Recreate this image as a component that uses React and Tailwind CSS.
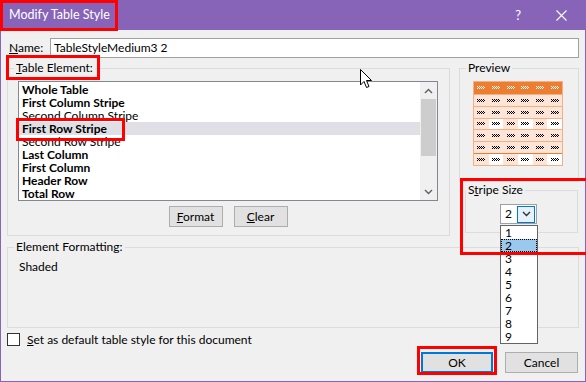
import React from "react";

function Mark({ color }) {
  const rects = [];
  for (let y = 0; y < 3; y++) {
    for (let x = 0; x < 8; x++) {
      if ((x + y) % 2 === 0) rects.push(<rect key={`${x}-${y}`} x={x} y={y} width="1" height="1" fill={color} />);
    }
  }
  return (
    <svg width="8" height="3" viewBox="0 0 8 3" shapeRendering="crispEdges">
      {rects}
    </svg>
  );
}

function PreviewGrid() {
  const rows = [0, 1, 2, 3, 4, 5, 6];
  const cols = [0, 1, 2, 3, 4, 5];
  return (
    <div className="w-[90px] h-[85px] border border-[#f4b084] flex flex-col bg-[#fce4d6]">
      {rows.map((r) => (
        <div
          key={r}
          className={
            r === 0
              ? "h-[12px] flex bg-[#ed7d31]"
              : r === 6
              ? "h-[12px] flex border-t border-[#ed7d31]"
              : "h-[12px] flex border-t border-[#f4b084]"
          }
        >
          {cols.map((c) => {
            const white = (r === 3 || r === 6) && c % 2 === 1;
            return (
              <div
                key={c}
                className={
                  white
                    ? "flex-1 flex items-center justify-center bg-white"
                    : "flex-1 flex items-center justify-center"
                }
              >
                <Mark color={r === 0 ? "#ffffff" : "#000000"} />
              </div>
            );
          })}
        </div>
      ))}
    </div>
  );
}

function Chevron({ up, color = "#606060" }) {
  return (
    <svg width="9" height="6" viewBox="0 0 9 6">
      <path
        d={up ? "M1 5 L4.5 1.5 L8 5" : "M1 1 L4.5 4.5 L8 1"}
        fill="none"
        stroke={color}
        strokeWidth="1.4"
      />
    </svg>
  );
}

export default function App() {
  const items = [
    { t: "Whole Table", b: true },
    { t: "First Column Stripe", b: true },
    { t: "Second Column Stripe", b: false },
    { t: "First Row Stripe", b: true, sel: true },
    { t: "Second Row Stripe", b: false },
    { t: "Last Column", b: true },
    { t: "First Column", b: true },
    { t: "Header Row", b: true },
    { t: "Total Row", b: true },
  ];
  const sizes = ["1", "2", "3", "4", "5", "6", "7", "8", "9"];

  return (
    <div className="w-[586px] h-[382px] relative bg-[#f0f0f0] text-[12px] leading-[16px] text-black overflow-hidden font-['Lato','Segoe_UI',sans-serif]">
      {/* Title bar */}
      <div className="h-[30px] bg-[#8764b8] flex items-center pl-[9px] text-white">
        <span className="text-[12.5px]">Modify Table Style</span>
        <span className="ml-auto mr-[35px] text-[13px]">?</span>
        <svg width="11" height="11" viewBox="0 0 11 11" className="mr-[19px]">
          <path d="M0.5 0.5 L10.5 10.5 M10.5 0.5 L0.5 10.5" stroke="#ffffff" strokeWidth="1.1" />
        </svg>
      </div>

      {/* Body */}
      <div className="h-[352px] border-x border-b border-[#8764b8] flex flex-col">
        {/* Name row */}
        <div className="mt-[8px] flex items-center h-[20px] pl-[8px]">
          <span className="w-[41px]">
            <span className="underline">N</span>ame:
          </span>
          <div className="w-[529px] h-[20px] border border-[#a0a0a0] bg-white pl-[3px] flex items-center">
            TableStyleMedium3 2
          </div>
        </div>

        {/* Top area */}
        <div className="mt-[2px] flex pl-[6px]">
          <fieldset className="w-[443px] h-[176px] border border-[#dcdcdc]">
            <legend className="ml-[6px] px-[2px] leading-[16px]">
              <span className="underline">T</span>able Element:
            </legend>
            <div className="mt-[5px] ml-[10px] w-[420px] h-[120px] border border-[#828790] bg-white flex">
              <div className="flex-1 pt-[1px]">
                {items.map((it) => (
                  <div
                    key={it.t}
                    className={
                      (it.sel ? "bg-[#e0dfe5] " : "") +
                      (it.b ? "font-bold " : "") +
                      "h-[13px] leading-[13px] pl-[3px] whitespace-nowrap"
                    }
                  >
                    {it.t}
                  </div>
                ))}
              </div>
              <div className="w-[17px] bg-[#f0f0f0] flex flex-col items-center">
                <div className="h-[17px] flex items-center justify-center">
                  <Chevron up />
                </div>
                <div className="w-[15px] h-[57px] bg-[#cdcdcd]" />
                <div className="flex-1" />
                <div className="h-[17px] flex items-center justify-center">
                  <Chevron />
                </div>
              </div>
            </div>
            <div className="mt-[5px] ml-[10px] w-[420px] flex justify-center gap-[11px]">
              <div className="w-[54px] h-[21px] border border-[#adadad] bg-[#e1e1e1] flex items-center justify-center">
                <span>
                  <span className="underline">F</span>ormat
                </span>
              </div>
              <div className="w-[54px] h-[21px] border border-[#adadad] bg-[#e1e1e1] flex items-center justify-center">
                <span>
                  <span className="underline">C</span>lear
                </span>
              </div>
            </div>
          </fieldset>

          <div className="ml-[9px] flex flex-col">
            <fieldset className="w-[120px] h-[122px] border border-[#dcdcdc]">
              <legend className="ml-[6px] px-[2px] leading-[16px]">Preview</legend>
              <div className="mt-[5px] ml-[13px]">
                <PreviewGrid />
              </div>
            </fieldset>
            <fieldset className="ml-[6px] w-[113px] h-[51px] border border-[#dcdcdc]">
              <legend className="ml-[0px] px-[2px] leading-[16px]">
                S<span className="underline">t</span>ripe Size
              </legend>
              <div className="relative mt-[6px] ml-[34px] w-[37px] h-[20px] border border-[#a0a0a0] bg-white flex items-center">
                <span className="pl-[4px] flex-1">2</span>
                <div className="w-[18px] h-[17px] mr-[1px] border border-[#0078d7] bg-[#e5f1fb] flex items-center justify-center">
                  <Chevron color="#333333" />
                </div>
                <div className="absolute left-[-1px] top-[20px] w-[38px] h-[119px] border border-[#646464] bg-white">
                  {sizes.map((s) => (
                    <div
                      key={s}
                      className={
                        s === "2"
                          ? "h-[13px] leading-[12px] pl-[3px] bg-[#99c9ef] border border-dotted border-black"
                          : "h-[13px] leading-[13px] pl-[4px]"
                      }
                    >
                      {s}
                    </div>
                  ))}
                </div>
              </div>
            </fieldset>
          </div>
        </div>

        {/* Element formatting */}
        <fieldset className="mt-[3px] ml-[6px] w-[572px] h-[89px] border border-[#dcdcdc]">
          <legend className="ml-[6px] px-[2px] leading-[16px]">Element Formatting:</legend>
          <div className="mt-[4px] ml-[11px]">Shaded</div>
        </fieldset>

        {/* Checkbox */}
        <div className="mt-[5px] ml-[6px] flex items-center h-[13px]">
          <div className="w-[13px] h-[13px] border border-[#333333] bg-white" />
          <span className="ml-[7px]">
            <span className="underline">S</span>et as default table style for this document
          </span>
        </div>

        {/* Buttons */}
        <div className="mt-[6px] flex justify-end pr-[7px] gap-[12px]">
          <div className="w-[72px] h-[21px] border-2 border-[#0078d7] bg-[#e1e1e1] flex items-center justify-center">
            OK
          </div>
          <div className="w-[73px] h-[21px] border border-[#adadad] bg-[#e1e1e1] flex items-center justify-center">
            Cancel
          </div>
        </div>
      </div>

      {/* Annotation overlays */}
      <div className="absolute left-0 top-0 w-[118px] h-[31px] border-[3px] border-[#ff0000]" />
      <div className="absolute left-[6px] top-[55px] w-[94px] h-[25px] border-[3px] border-[#ff0000]" />
      <div className="absolute left-[16px] top-[118px] w-[109px] h-[23px] border-[3px] border-[#ff0000]" />
      <div className="absolute left-[460px] top-[178px] w-[130px] h-[77px] border-[3px] border-[#ff0000]" />
      <div className="absolute left-[417px] top-[346px] w-[80px] h-[29px] border-[3px] border-[#ff0000]" />

      {/* Mouse cursor */}
      <svg className="absolute left-[360px] top-[69px]" width="13" height="20" viewBox="0 0 13 20">
        <path d="M0.5 0.5 L0.5 16 L4 12.5 L6.5 18.5 L9 17.5 L6.5 11.5 L11.5 11.5 Z" fill="#ffffff" stroke="#000000" strokeWidth="1" />
      </svg>
    </div>
  );
}
